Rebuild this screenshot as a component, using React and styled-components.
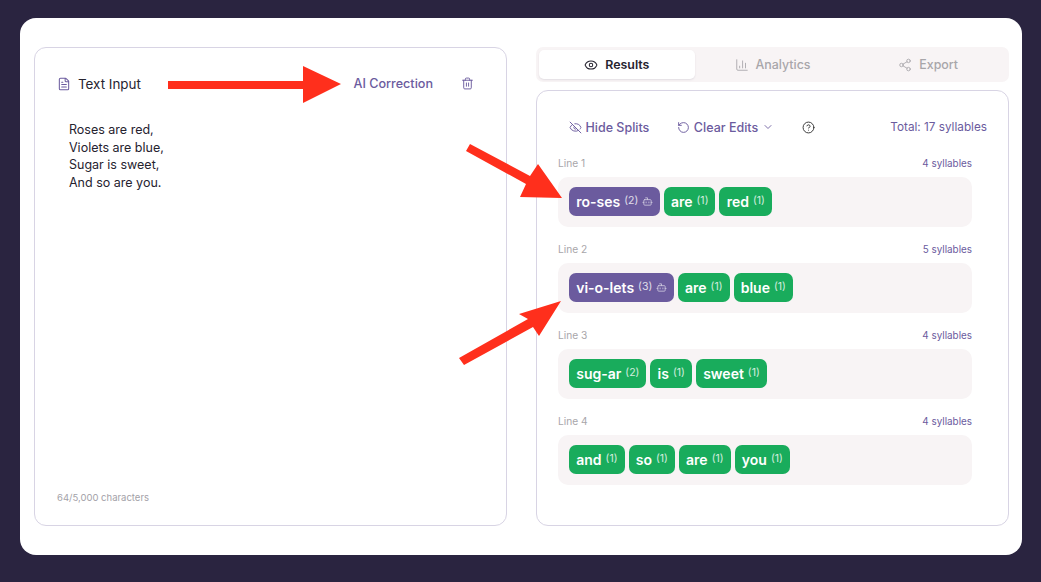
import React from "react";
import styled, { createGlobalStyle } from "styled-components";
import {
  Bot,
  ChartColumn,
  ChevronDown,
  CircleHelp,
  Eye,
  EyeOff,
  FileText,
  RotateCcw,
  Share2,
  Trash2,
} from "lucide-react";

const lines = [
  {
    name: "Line 1",
    total: 4,
    words: [
      { text: "ro-ses", count: 2, ai: true },
      { text: "are", count: 1 },
      { text: "red", count: 1 },
    ],
  },
  {
    name: "Line 2",
    total: 5,
    words: [
      { text: "vi-o-lets", count: 3, ai: true },
      { text: "are", count: 1 },
      { text: "blue", count: 1 },
    ],
  },
  {
    name: "Line 3",
    total: 4,
    words: [
      { text: "sug-ar", count: 2 },
      { text: "is", count: 1 },
      { text: "sweet", count: 1 },
    ],
  },
  {
    name: "Line 4",
    total: 4,
    words: [
      { text: "and", count: 1 },
      { text: "so", count: 1 },
      { text: "are", count: 1 },
      { text: "you", count: 1 },
    ],
  },
];

const App = () => {
  return (
    <Page>
      <GlobalStyle />
      <Card>
        <InputPanel>
          <InputHeader>
            <InputTitle>
              <FileText size={14} color="#6b5b9e" strokeWidth={1.75} />
              Text Input
            </InputTitle>
            <InputActions>
              <Correction>AI Correction</Correction>
              <Trash2 size={13} color="#6b5b9e" strokeWidth={1.75} />
            </InputActions>
          </InputHeader>
          <Poem>
            Roses are red,
            <br />
            Violets are blue,
            <br />
            Sugar is sweet,
            <br />
            And so are you.
          </Poem>
          <CharCount>64/5,000 characters</CharCount>
        </InputPanel>
        <ResultColumn>
          <Tabs>
            <Tab $active>
              <Eye size={14} strokeWidth={1.75} />
              Results
            </Tab>
            <Tab>
              <ChartColumn size={14} strokeWidth={1.5} />
              Analytics
            </Tab>
            <Tab>
              <Share2 size={14} strokeWidth={1.5} />
              Export
            </Tab>
          </Tabs>
          <ResultPanel>
            <Toolbar>
              <ToolButton>
                <EyeOff size={13} strokeWidth={1.75} />
                Hide Splits
              </ToolButton>
              <ToolButton>
                <RotateCcw size={13} strokeWidth={1.75} />
                Clear Edits
                <ChevronDown size={12} strokeWidth={1.75} />
              </ToolButton>
              <CircleHelp size={13} color="#333" strokeWidth={1.75} />
              <Total>Total: 17 syllables</Total>
            </Toolbar>
            <LineList>
              {lines.map((line) => (
                <div key={line.name}>
                  <LineHead>
                    <LineName>{line.name}</LineName>
                    <LineTotal>{line.total} syllables</LineTotal>
                  </LineHead>
                  <WordRow>
                    {line.words.map((word) => (
                      <Word key={word.text} $ai={word.ai}>
                        {word.text}
                        <Count>({word.count})</Count>
                        {word.ai && <Bot size={11} strokeWidth={1.75} />}
                      </Word>
                    ))}
                  </WordRow>
                </div>
              ))}
            </LineList>
          </ResultPanel>
        </ResultColumn>
      </Card>
      <Arrows viewBox="0 0 1041 582">
        <polygon points="168,81 303,81 303,66 341,84 303,103 303,89 168,89" />
        <polygon points="470,144 530,176 538,164 562,198 520,197 526,184 466,151" />
        <polygon points="459,358 528,319 519,314 561,301 539,336 533,327 464,365" />
      </Arrows>
    </Page>
  );
};

//styled component
const GlobalStyle = createGlobalStyle`
  body {
    margin: 0;
    background: #2a2440;
    font-family: Inter, "Liberation Sans", sans-serif;
  }
`;
const Page = styled.div`
  position: relative;
  width: 1041px;
  height: 582px;
  padding: 18px 19px 27px 20px;
  box-sizing: border-box;
  overflow: hidden;
`;
const Card = styled.div`
  height: 100%;
  box-sizing: border-box;
  display: flex;
  gap: 29px;
  padding: 29px 13px 29px 14px;
  background: #fff;
  border-radius: 16px;
`;
const InputPanel = styled.div`
  width: 473px;
  box-sizing: border-box;
  display: flex;
  flex-direction: column;
  padding: 27px 32px 22px 22px;
  border: 1px solid #d8d4e4;
  border-radius: 12px;
`;
const InputHeader = styled.div`
  display: flex;
  align-items: center;
  justify-content: space-between;
  height: 18px;
`;
const InputTitle = styled.div`
  display: flex;
  align-items: center;
  gap: 7px;
  font-size: 13.4px;
  color: #26232f;
`;
const InputActions = styled.div`
  display: flex;
  align-items: center;
  gap: 28px;
  margin-bottom: 2px;
`;
const Correction = styled.span`
  font-size: 12.6px;
  font-weight: 500;
  color: #6b5b9e;
`;
const Poem = styled.div`
  margin: 28px 0 0 12px;
  flex: 1;
  font-size: 12.5px;
  line-height: 17.6px;
  color: #26232f;
`;
const CharCount = styled.div`
  font-size: 9.5px;
  color: #a3a1a8;
`;
const ResultColumn = styled.div`
  width: 473px;
  display: flex;
  flex-direction: column;
  gap: 8px;
`;
const Tabs = styled.div`
  display: flex;
  height: 35px;
  box-sizing: border-box;
  padding: 3px;
  background: #f8f4f5;
  border-radius: 7px;
`;
const Tab = styled.div`
  flex: 1;
  display: flex;
  align-items: center;
  justify-content: center;
  gap: 7px;
  font-size: 12.4px;
  font-weight: ${(p) => (p.$active ? 600 : 500)};
  color: ${(p) => (p.$active ? "#26232f" : "#a8a6aa")};
  background: ${(p) => (p.$active ? "#fff" : "transparent")};
  border-radius: 5px;
  box-shadow: ${(p) => (p.$active ? "0 1px 2px rgba(40, 30, 70, 0.1)" : "none")};
`;
const ResultPanel = styled.div`
  flex: 1;
  box-sizing: border-box;
  padding: 27px 21px 0 21px;
  border: 1px solid #d8d4e4;
  border-radius: 12px;
`;
const Toolbar = styled.div`
  display: flex;
  align-items: center;
  height: 18px;
  padding-left: 11px;
`;
const ToolButton = styled.div`
  display: flex;
  align-items: center;
  gap: 3.5px;
  margin-right: 28px;
  font-size: 12.5px;
  font-weight: 500;
  color: #6b5b9e;
`;
const Total = styled.div`
  margin-left: auto;
  font-size: 11.75px;
  color: #6b5b9e;
`;
const LineList = styled.div`
  display: flex;
  flex-direction: column;
  gap: 15px;
  margin-top: 20px;
  width: 414px;
`;
const LineHead = styled.div`
  display: flex;
  align-items: center;
  justify-content: space-between;
  height: 14px;
  margin-bottom: 7px;
`;
const LineName = styled.span`
  font-size: 10.2px;
  color: #a8a6aa;
`;
const LineTotal = styled.span`
  font-size: 9.9px;
  color: #6b5b9e;
`;
const WordRow = styled.div`
  display: flex;
  gap: 4px;
  height: 50px;
  box-sizing: border-box;
  padding: 10px 11px;
  background: #f8f4f5;
  border-radius: 10px;
`;
const Word = styled.div`
  display: flex;
  align-items: center;
  height: 29px;
  box-sizing: border-box;
  padding: 0 7px 0 7.2px;
  font-size: 14px;
  font-weight: 600;
  color: #fff;
  background: ${(p) => (p.$ai ? "#6b5b9e" : "#19ac5c")};
  border-radius: 7px;
  svg {
    margin-left: 3.5px;
    opacity: 0.7;
  }
`;
const Count = styled.span`
  margin-left: 4px;
  margin-top: -3px;
  font-size: 10.5px;
  font-weight: 400;
  opacity: 0.8;
`;
const Arrows = styled.svg`
  position: absolute;
  left: 0;
  top: 0;
  width: 1041px;
  height: 582px;
  fill: #ff2f1c;
  pointer-events: none;
`;

export default App;
